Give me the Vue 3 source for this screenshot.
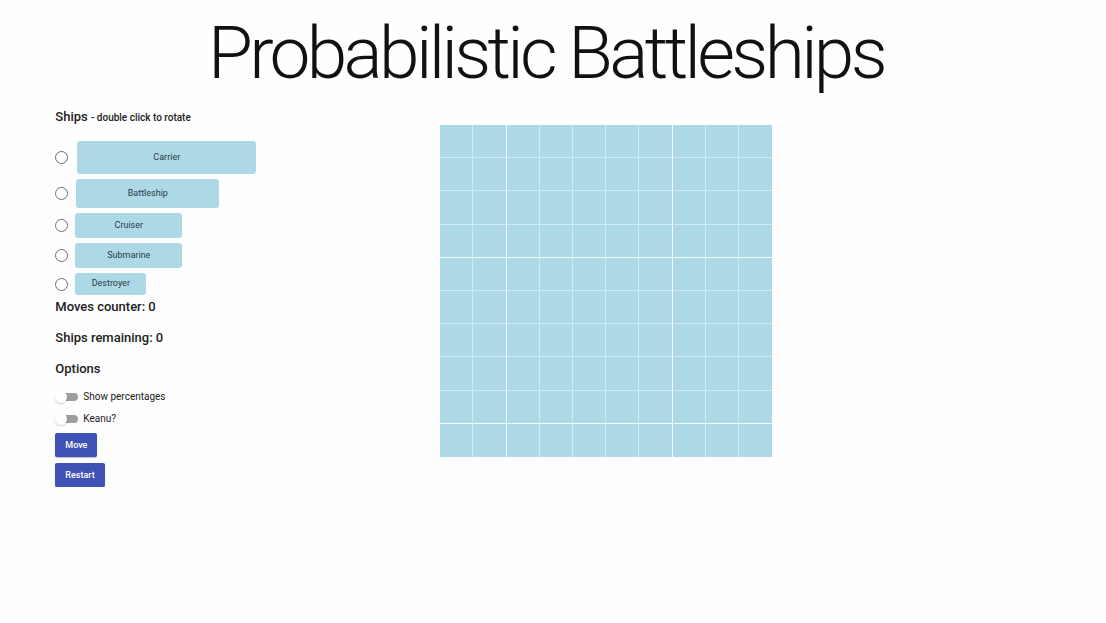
<script setup>
import { ref } from 'vue'

const ships = [
  { name: 'Carrier', size: 'carrier' },
  { name: 'Battleship', size: 'battleship' },
  { name: 'Cruiser', size: 'cruiser' },
  { name: 'Submarine', size: 'submarine' },
  { name: 'Destroyer', size: 'destroyer' },
]
const selected = ref('')
const showPercentages = ref(false)
const keanu = ref(false)
const moves = ref(0)
const remaining = ref(0)

function restart() {
  moves.value = 0
  selected.value = ''
}
</script>

<template>
  <div class="page">
    <h1 class="title">Probabilistic Battleships</h1>
    <main class="content">
      <section class="side">
        <h2 class="heading">Ships <small>- double click to rotate</small></h2>
        <div class="ships">
          <label v-for="s in ships" :key="s.name" class="ship-row">
            <input v-model="selected" type="radio" name="ship" :value="s.name" class="radio" />
            <span class="ship" :class="s.size">{{ s.name }}</span>
          </label>
        </div>
        <h2 class="heading">Moves counter: {{ moves }}</h2>
        <h2 class="heading">Ships remaining: {{ remaining }}</h2>
        <h2 class="heading options-heading">Options</h2>
        <label class="option">
          <input v-model="showPercentages" type="checkbox" class="toggle" />
          <span>Show percentages</span>
        </label>
        <label class="option">
          <input v-model="keanu" type="checkbox" class="toggle" />
          <span>Keanu?</span>
        </label>
        <div class="actions">
          <button type="button" class="btn" @click="moves++">Move</button>
          <button type="button" class="btn" @click="restart">Restart</button>
        </div>
      </section>
      <div class="board">
        <template v-for="r in 10" :key="r">
          <div
            v-for="c in 10"
            :key="c"
            class="cell"
            :class="{ 'bright-right': c === 2 || c === 7, 'bright-bottom': r === 4 || r === 9, 'last-col': c === 10, 'last-row': r === 10 }"
          ></div>
        </template>
      </div>
    </main>
  </div>
</template>

<style>
body {
  background: #fefefe;
}
</style>

<style scoped>
.page {
  font-family: Roboto, "Liberation Sans", sans-serif;
  color: #212121;
}
.title {
  margin: 0;
  padding: 11px 14px 0 0;
  font-size: 73px;
  line-height: 84px;
  font-weight: 300;
  letter-spacing: -0.05em;
  text-align: center;
  color: #111;
}
.content {
  display: grid;
  grid-template-columns: 385px minmax(0, 332px);
  align-items: start;
  padding: 13px 5% 0;
}
.heading {
  margin: 0 0 13px;
  font-size: 13px;
  line-height: 18px;
  font-weight: 500;
}
.heading small {
  font-size: 10px;
}
.options-heading {
  margin-bottom: 8px;
}
.ships {
  display: flex;
  flex-direction: column;
  gap: 5px;
  margin: 14px 0 3px;
}
.ship-row {
  display: flex;
  align-items: center;
  gap: 7px;
}
.radio {
  appearance: none;
  flex: none;
  width: 13px;
  height: 13px;
  margin: 0;
  border: 1px solid #6e6e6e;
  border-radius: 50%;
  background: #fff;
}
.radio:checked {
  background: radial-gradient(#3f51b5 40%, #fff 45%);
}
.ship {
  display: flex;
  align-items: center;
  justify-content: center;
  box-sizing: border-box;
  padding-bottom: 2px;
  border-radius: 3px;
  background: #add8e6;
  font-size: 9px;
  line-height: 12px;
  color: #2b3c44;
}
.carrier {
  width: 179px;
  height: 33px;
  margin-left: 2px;
}
.battleship {
  width: 143px;
  height: 29px;
  margin-left: 1px;
}
.cruiser,
.submarine {
  width: 107px;
  height: 25px;
}
.destroyer {
  width: 71px;
  height: 22px;
}
.option {
  display: flex;
  align-items: center;
  gap: 5px;
  height: 22px;
  font-size: 10px;
  line-height: 14px;
}
.toggle {
  appearance: none;
  display: flex;
  align-items: center;
  width: 20px;
  height: 8px;
  margin: 0 0 0 3px;
  border-radius: 4px;
  background: #9e9e9e;
}
.toggle::before {
  content: "";
  width: 12px;
  height: 12px;
  margin-left: -3px;
  flex: none;
  border-radius: 50%;
  background: #fff;
  box-shadow: 0 1px 2px rgba(0, 0, 0, 0.2);
}
.toggle:checked::before {
  margin-left: 11px;
  background: #3f51b5;
}
.actions {
  display: flex;
  flex-direction: column;
  align-items: flex-start;
  gap: 6px;
  margin-top: 3px;
}
.btn {
  height: 24px;
  padding: 0 10px;
  border: 0;
  border-radius: 2px;
  background: #3f51b5;
  color: #fff;
  font: 500 9px/24px Roboto, "Liberation Sans", sans-serif;
  box-shadow: 0 1px 1px rgba(0, 0, 0, 0.25);
}
.board {
  display: grid;
  grid-template-columns: repeat(10, 1fr);
  grid-template-rows: repeat(10, 1fr);
  aspect-ratio: 1;
  margin-top: 17px;
  background: #add8e6;
}
.cell {
  border: 0 solid #cdebf3;
  border-right-width: 1px;
  border-bottom-width: 1px;
}
.bright-right {
  border-right-color: #f4fcfe;
}
.bright-bottom {
  border-bottom-color: #f4fcfe;
}
.last-col {
  border-right-width: 0;
}
.last-row {
  border-bottom-width: 0;
}
</style>
